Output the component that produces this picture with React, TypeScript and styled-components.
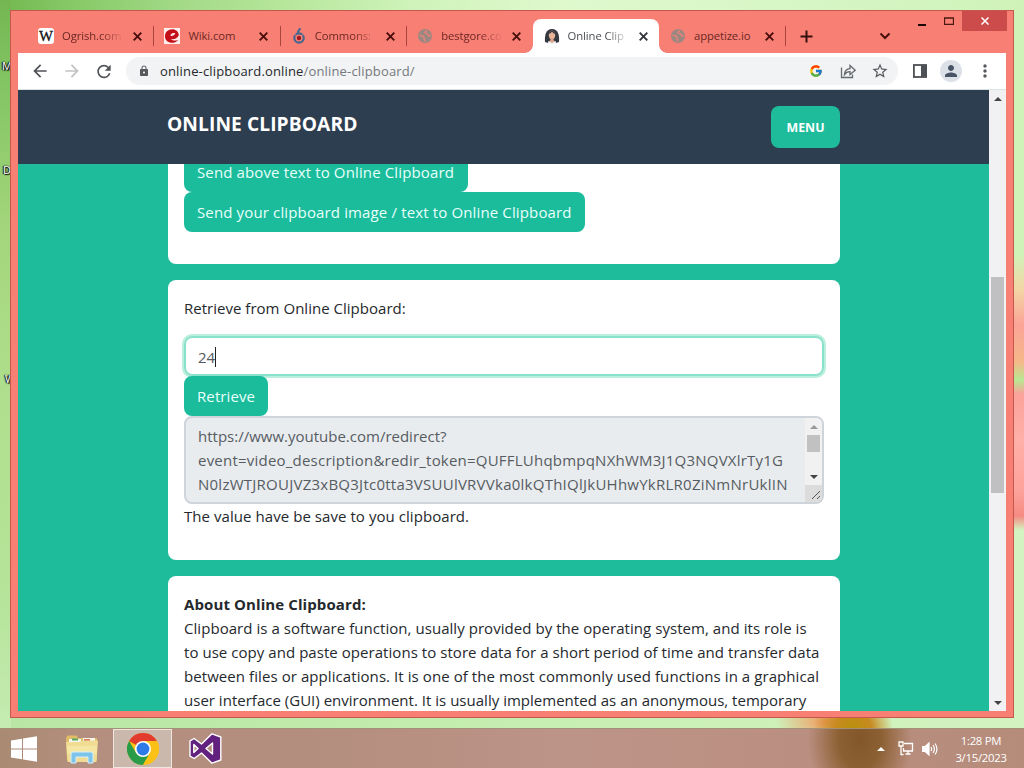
import React from 'react'
import styled, { createGlobalStyle, css } from 'styled-components'
import { FcGoogle } from 'react-icons/fc'
import {
  MdArrowBack,
  MdArrowForward,
  MdLock,
  MdMoreVert,
  MdPerson,
  MdRefresh,
  MdStarBorder
} from 'react-icons/md'

const GlobalStyle = createGlobalStyle`
  * {
    box-sizing: border-box;
  }

  body {
    margin: 0;
    overflow: hidden;
    font-family: 'Open Sans', 'Noto Sans', sans-serif;
  }
`

const Desktop = styled.div`
  position: relative;
  display: flex;
  flex-direction: column;
  width: 1024px;
  height: 768px;
  overflow: hidden;
  background:
    radial-gradient(ellipse 40px 34px at 853px 728px, #b8900c 0%, #c88a20 45%, transparent 100%),
    radial-gradient(ellipse 50px 22px at 826px 722px, #f29a60 0%, transparent 100%),
    linear-gradient(180deg, transparent 255px, #f3d5a4 290px, #fba497 325px, #f5b888 362px, #b8e892 380px, #fba29a 394px, #ffb0a8 440px, #fda39b 490px, #f58b82 516px, transparent 530px) 1014px 0 / 10px 768px no-repeat,
    linear-gradient(180deg, #74b751 0, #84c565 90px, #a2d57b 220px, #b0df8d 400px, #b6e49a 600px, #c5ebb2 728px) 0 0 / 11px 728px no-repeat,
    linear-gradient(90deg, #72b84f 0, #86c866 70px, #a3da87 180px, #b7e79c 290px, #cdf2b8 400px, #dff9cd 560px, #d6f6c5 800px, #cff2b9 1024px) 0 0 / 1024px 300px no-repeat,
    linear-gradient(90deg, #b9e6a4 0, #bfeaaa 300px, #c9efb5 600px, #d3f3c0 1024px);
`

const DesktopLabel = styled.span<{ $top: number; $left: number }>`
  position: absolute;
  top: ${props => props.$top}px;
  left: ${props => props.$left}px;
  font-size: 11px;
  line-height: 14px;
  color: #fff;
  text-shadow: 0 0 2px #000, 1px 1px 1px #000, -1px 0 1px #000;
`

const BrowserWindow = styled.div`
  position: relative;
  display: flex;
  flex-direction: column;
  width: 1004px;
  height: 708px;
  margin: 10px 0 0 10px;
  padding: 0 7px 6px;
  border: 1px solid #c4584d;
  background: #f77f74;
`

const TabStrip = styled.div`
  position: relative;
  display: flex;
  align-items: flex-end;
  flex: none;
  height: 42px;
  padding-left: 9px;
`

const TabItem = styled.div<{ $active?: boolean; $separator?: boolean }>`
  position: relative;
  display: flex;
  align-items: center;
  flex: none;
  width: 126.4px;
  height: 34px;
  padding: 0 9px 0 11px;
  color: ${props => (props.$active ? '#4a4d51' : '#6c2723')};

  ${props =>
    props.$active &&
    css`
      background: #fff;
      border-radius: 8px 8px 0 0;

      &::before,
      &::after {
        content: '';
        position: absolute;
        bottom: 0;
        width: 8px;
        height: 8px;
      }

      &::before {
        left: -8px;
        background: radial-gradient(circle at 0 0, transparent 7.5px, #fff 8px);
      }

      &::after {
        right: -8px;
        background: radial-gradient(circle at 100% 0, transparent 7.5px, #fff 8px);
      }
    `}

  ${props =>
    props.$separator &&
    css`
      &::after {
        content: '';
        position: absolute;
        right: -1px;
        top: 7px;
        width: 1px;
        height: 20px;
        background: #a8463e;
      }
    `}
`

const TabIcon = styled.span`
  display: flex;
  flex: none;
  width: 16px;
  height: 16px;
  margin-right: 8px;
`

const TabTitle = styled.span<{ $fade?: boolean }>`
  width: 62px;
  overflow: hidden;
  white-space: nowrap;
  font-size: 11.3px;
  line-height: 18px;
  letter-spacing: -0.1px;
  mask-image: ${props => (props.$fade ? 'linear-gradient(90deg, #000 62%, transparent 100%)' : 'none')};
`

const CloseIcon = styled.svg<{ $dark?: boolean }>`
  flex: none;
  width: 9px;
  height: 9px;
  margin-left: 9px;
  stroke: ${props => (props.$dark ? '#33363a' : '#4a0f0c')};
  stroke-width: 1.9;
`

const NewTabIcon = styled.svg`
  width: 13px;
  height: 13px;
  margin: 0 0 10px 15px;
  stroke: #35100e;
  stroke-width: 2;
`

const TabSearchIcon = styled.svg`
  width: 12px;
  height: 8px;
  margin: 0 0 13px 66px;
  fill: none;
  stroke: #4a0f0c;
  stroke-width: 2;
`

const WindowControls = styled.div`
  position: absolute;
  top: 0;
  right: -1px;
  display: flex;
  height: 20px;
`

const ControlButton = styled.div<{ $close?: boolean }>`
  display: flex;
  align-items: center;
  justify-content: center;
  width: ${props => (props.$close ? 45 : 27)}px;
  height: 20px;
  background: ${props => (props.$close ? '#cc4b4b' : 'transparent')};
`

const Toolbar = styled.div`
  display: flex;
  align-items: center;
  flex: none;
  height: 37px;
  padding: 0 10px 0 12px;
  background: #fff;
  color: #55585c;
  border-bottom: 1px solid #d9e4e0;
`

const NavButton = styled.span<{ $disabled?: boolean }>`
  display: flex;
  align-items: center;
  justify-content: center;
  flex: none;
  width: 20px;
  height: 20px;
  margin-right: 12px;
  color: ${props => (props.$disabled ? '#c0c2c4' : '#4f5256')};
`

const Omnibox = styled.div`
  display: flex;
  align-items: center;
  flex: none;
  width: 772px;
  height: 28px;
  padding: 0 9px 0 12px;
  border-radius: 14px;
  background: #f1f3f4;
`

const Url = styled.span`
  flex: 1;
  margin-left: 10px;
  font-size: 13px;
  letter-spacing: 0.16px;
  color: #75797e;

  b {
    font-weight: 400;
    color: #26292d;
  }
`

const OmniboxIcon = styled.span`
  display: flex;
  align-items: center;
  justify-content: center;
  width: 18px;
  height: 18px;
  margin-left: 14px;
`

const ToolbarActions = styled.div`
  display: flex;
  align-items: center;
  justify-content: space-between;
  flex: 1;
  padding: 0 1px 0 15px;
`

const Avatar = styled.span`
  display: flex;
  align-items: center;
  justify-content: center;
  width: 22px;
  height: 22px;
  border-radius: 50%;
  background: #dce1e8;
  color: #495366;
`

const Viewport = styled.div`
  display: flex;
  flex: 1;
  min-height: 0;
`

const Page = styled.div`
  display: flex;
  flex-direction: column;
  flex: none;
  width: 971px;
  overflow: hidden;
  background: #1fbc9c;
  color: #25292d;
`

const PageHeader = styled.header`
  display: flex;
  align-items: center;
  justify-content: space-between;
  flex: none;
  height: 74px;
  padding: 0 149px 0 150px;
  background: #2d3e50;
  color: #fff;
`

const Brand = styled.div`
  margin: -7px 0 0 -1px;
  font-size: 19.2px;
  font-weight: 700;
  letter-spacing: 0.08px;
`

const MenuButton = styled.button`
  width: 69px;
  height: 42px;
  padding: 0;
  border: 0;
  border-radius: 8px;
  background: #1fbc9c;
  color: #fff;
  font: 700 12.4px 'Open Sans', sans-serif;
`

const Main = styled.main`
  display: flex;
  flex-direction: column;
  gap: 16px;
  flex: 1;
  min-height: 0;
  padding: 0 149px 0 150px;
  overflow: hidden;
`

const Card = styled.section<{ $height: number; $scrolled?: boolean }>`
  display: flex;
  flex-direction: column;
  align-items: flex-start;
  justify-content: ${props => (props.$scrolled ? 'flex-end' : 'flex-start')};
  flex: none;
  height: ${props => props.$height}px;
  padding: ${props => (props.$scrolled ? '0 16px 32px' : '16px')};
  overflow: hidden;
  border-radius: ${props => (props.$scrolled ? '0 0 8px 8px' : '8px')};
  background: #fff;
`

const Button = styled.button<{ $width: number; $spacing?: number }>`
  flex: none;
  width: ${props => props.$width}px;
  height: 40px;
  padding: 0 0 0 13px;
  border: 0;
  border-radius: 8px;
  background: #1abc9c;
  color: #e9fffa;
  font: 400 15px/24px 'Open Sans', sans-serif;
  letter-spacing: ${props => props.$spacing || 0}px;
  text-align: left;
  white-space: nowrap;
`

const Line = styled.div<{ $spacing?: number; $bold?: boolean }>`
  font-size: 15px;
  font-weight: ${props => (props.$bold ? 700 : 400)};
  line-height: 24px;
  letter-spacing: ${props => props.$spacing || 0}px;
  white-space: nowrap;
`

const CodeInput = styled.div`
  display: flex;
  align-items: center;
  flex: none;
  width: 100%;
  height: 40px;
  margin-top: 16px;
  padding: 2px 12px 0 12px;
  border: 2px solid #8ae0c8;
  border-radius: 8px;
  box-shadow: 0 0 0 2px #b9efdf;
  color: #55595d;
  font-size: 15px;
`

const Caret = styled.span`
  width: 1px;
  height: 20px;
  background: #222;
`

const ResultBox = styled.div`
  display: flex;
  justify-content: space-between;
  flex: none;
  width: 100%;
  height: 88px;
  border: 2px solid #ced4da;
  border-radius: 8px;
  background: #e9ecef;
  color: #565c62;
  overflow: hidden;
`

const ResultText = styled.div`
  padding: 6px 0 0 12px;
`

const BoxScroll = styled.div`
  display: flex;
  flex-direction: column;
  align-items: center;
  flex: none;
  width: 17px;
  background: #f1f1f1;
`

const BoxThumb = styled.div`
  width: 13px;
  height: 17px;
  margin-bottom: auto;
  background: #c1c1c1;
`

const ResizeGrip = styled.svg`
  flex: none;
  width: 17px;
  height: 17px;
  background: #dcdcdc;
  stroke: #555;
`

const Arrow = styled.span<{ $down?: boolean; $dim?: boolean }>`
  display: flex;
  align-items: center;
  justify-content: center;
  flex: none;
  width: 17px;
  height: 17px;

  &::before {
    content: '';
    border: 4px solid transparent;
    border-top-width: ${props => (props.$down ? 4 : 0)}px;
    border-bottom-width: ${props => (props.$down ? 0 : 4)}px;
    border-top-color: ${props => (props.$dim ? '#999' : '#444')};
    border-bottom-color: ${props => (props.$dim ? '#999' : '#444')};
  }
`

const PageScroll = styled.div`
  display: flex;
  flex-direction: column;
  align-items: center;
  width: 17px;
  background: #f1f0f2;
`

const PageThumb = styled.div`
  width: 13px;
  height: 216px;
  margin: 170px 0 auto;
  background: #c0bfc1;
`

const Taskbar = styled.div`
  display: flex;
  align-items: center;
  width: 1024px;
  height: 40px;
  margin-top: auto;
  padding-left: 10px;
  border-top: 1px solid #a29078;
  background:
    radial-gradient(ellipse 52px 75px at 860px 10px, #835729 0%, #8b6032 40%, transparent 100%),
    linear-gradient(90deg, #a98a72 0, #b48f80 90px, #b38d7d 300px, #bd9488 560px, #bb9083 760px, #b58b7a 1024px);
`

const TaskIcon = styled.span<{ $width: number; $indent?: number }>`
  display: flex;
  align-items: center;
  justify-content: center;
  flex: none;
  width: ${props => props.$width}px;
  height: 39px;
  padding-left: ${props => props.$indent || 0}px;
`

const ActiveTask = styled(TaskIcon)`
  border: 1px solid #efe6df;
  background: #cbb8ad;
`

const Tray = styled.div`
  display: flex;
  align-items: center;
  gap: 8px;
  margin-left: auto;
  padding-right: 15px;
`

const TrayArrow = styled.span`
  border: 4px solid transparent;
  border-top: 0;
  border-bottom-color: #fff;
  margin-right: 5px;
`

const Clock = styled.div`
  width: 56px;
  margin-left: 7px;
  color: #fff;
  font-size: 11.4px;
  line-height: 17px;
  letter-spacing: -0.3px;
  text-align: center;
  white-space: nowrap;
`

const WikipediaIcon = () => (
  <svg width="16" height="16" viewBox="0 0 16 16">
    <rect width="16" height="16" rx="3" fill="#fff" />
    <text x="8" y="12.8" fontFamily="Liberation Serif, serif" fontSize="14" textAnchor="middle" textLength="14" lengthAdjust="spacingAndGlyphs" fill="#111" stroke="#111" strokeWidth=".3">
      W
    </text>
  </svg>
)

const WikiComIcon = () => (
  <svg width="16" height="16" viewBox="0 0 16 16">
    <rect width="16" height="16" fill="#fdf0ec" />
    <path d="M14.800 7.200C14.500 3.500 11.800 1.300 8.300 1.300 4 1.300 1 4.300 1 8.200c0 3.900 2.900 6.600 7 6.600 2.700 0 5-1.100 6.300-3.100-2.500 1.200-5.600 1.300-7.200-.7 3.200.6 6.200-.6 7.700-3.800ZM6.300 7.800c.5-2.200 2.600-3.300 5-2.500-.6 1.900-2.600 2.900-5 2.500Z" fill="#c4101a" />
  </svg>
)

const CommonsIcon = () => (
  <svg width="16" height="16" viewBox="0 0 16 16">
    <path d="M8.800 0C9.300 2 6.800 2.600 6.800 4.800" fill="none" stroke="#3d6796" strokeWidth="2" />
    <circle cx="8" cy="10" r="4.700" fill="none" stroke="#44678f" strokeWidth="2.200" />
    <circle cx="8" cy="10" r="2.200" fill="#a3171c" />
    <path d="M3.300 5.800 5.800 8.300M12.700 5.800 10.200 8.300" stroke="#f77f74" strokeWidth="1" />
  </svg>
)

const GlobeIcon = () => (
  <svg width="16" height="16" viewBox="0 0 16 16">
    <circle cx="8" cy="8" r="7" fill="#9d8781" />
    <path d="M2.500 7.200c1.500.8 2.800.2 4 1.300 1 .9-.2 1.700.8 2.600.7.700.6 1.500.1 2.400M9.500 2.300c.3 1-1 1.400-1.700 2 .2 1.200 1.200.9 2.300 1.400 1 .5.6 1.700 1.600 2.100.8.300 1.400-.1 2-.6" fill="none" stroke="#e58378" strokeWidth="1.500" />
  </svg>
)

const WomanIcon = () => (
  <svg width="16" height="16" viewBox="0 0 16 16">
    <path d="M1 14C.5 8 1.500 1 8 1s7.500 7 7 13l-3 1H4Z" fill="#34383f" />
    <ellipse cx="8" cy="7" rx="3.200" ry="4.200" fill="#e7b49b" />
    <path d="M6.500 10h3v2l2 2-3.500 2-3.500-2 2-2Z" fill="#dfa68e" />
    <path d="M4.500 13 8 15l3.500-2 1 3h-9Z" fill="#eff5f7" />
    <path d="M4.800 6C5 3.500 6.500 3 8 3s3 .5 3.200 3C9.500 5.500 8.500 4.500 8 3.500 7.500 4.500 6.500 5.500 4.800 6Z" fill="#34383f" />
  </svg>
)

const ShareIcon = () => (
  <svg width="17" height="15" viewBox="0 0 17 15" fill="none" stroke="#66696d" strokeWidth="1.300">
    <path d="M1.500 3.500v10h11v-3M4.500 10.500C4.800 6.800 6.800 4.700 10 4.600V1.500l5.200 4.700L10 10.500V7.600C7.500 7.500 6 8.400 4.500 10.500Z" />
  </svg>
)

const SidePanelIcon = () => (
  <svg width="14" height="14" viewBox="0 0 14 14">
    <rect x=".9" y="1" width="12.200" height="12" fill="none" stroke="#4d5054" strokeWidth="1.800" />
    <rect x="8" y="1" width="5.500" height="12" fill="#4d5054" />
  </svg>
)

const WindowsLogo = () => (
  <svg width="28" height="26" viewBox="0 0 28 26" fill="#fff">
    <path d="M1 4.500 12 2.700V12.600H1ZM13 2.500 27 .3V12.600H13ZM1 13.500H12V23.300L1 21.600ZM13 13.500H27V25.700L13 23.500Z" />
  </svg>
)

const ExplorerIcon = () => (
  <svg width="34" height="30" viewBox="0 0 34 30">
    <path d="M1 4 2.500 1.500h9L13 4h19v22H2Z" fill="#dfbd68" />
    <path d="M4 5h12v4H4ZM18 4h12v5H18Z" fill="#f6f6ec" />
    <path d="M7 4.500h6v2H7Z" fill="#5aa85f" />
    <path d="M19 5h6v2h-6Z" fill="#d97b60" />
    <path d="M1 8h14l2-1.500h16L31.500 28H2.500Z" fill="#f0dc92" />
    <path d="M2 12h30L31.500 20H2.500Z" fill="#f6e6a4" />
    <path d="M6 29V20q0-2 2-2h18q2 0 2 2v9h-5v-6H11v6Z" fill="#7dc3ea" stroke="#d8f0fa" />
  </svg>
)

const ChromeIcon = () => (
  <svg width="32" height="32" viewBox="0 0 32 32">
    <circle cx="16" cy="16" r="16" fill="#fbc116" />
    <path d="M16 16 2.140 8A16 16 0 0 1 29.860 8H16Z" fill="#e33b2e" />
    <path d="M2.140 8 9.070 20 16 24 22.930 20 16 32A16 16 0 0 1 2.140 8Z" fill="#2a9c49" />
    <path d="M29.860 8H16l6.930 12L16 32A16 16 0 0 0 29.860 8Z" fill="#fbc116" />
    <circle cx="16" cy="16" r="8" fill="#fff" />
    <circle cx="16" cy="16" r="6.400" fill="#2e7be8" />
  </svg>
)

const VisualStudioIcon = () => (
  <svg width="33" height="31" viewBox="0 0 33 31">
    <path
      fillRule="evenodd"
      d="M23 .8 31.800 4V27L23 30.200 12.500 20 5.200 25.500 1 23.200V7.800L5.200 5.500l7.300 5.500ZM23.500 10 17 15.500l6.500 5.500ZM4.800 11.500v8L9 15.500Z"
      fill="#63217f"
      stroke="#fff"
      strokeWidth="1.400"
      strokeLinejoin="round"
    />
  </svg>
)

const NetworkIcon = () => (
  <svg width="16" height="15" viewBox="0 0 16 15" fill="none" stroke="#fff" strokeWidth="1.300">
    <path d="M6 2.500h8.500v7.500H5.500V7M7.500 13h5M10 10v3M1 1h4v4H1ZM3 5v8.500h2.500" />
  </svg>
)

const SpeakerIcon = () => (
  <svg width="16" height="14" viewBox="0 0 16 14" fill="none" stroke="#fff" strokeWidth="1.200">
    <path d="M.7 4.500h2.500L7 1v12L3.200 9.500H.7Z" fill="#fff" />
    <path d="M9 5q1.300 2 0 4M11 3q2.800 4 0 8M13 1.500q4 5.500 0 11" />
  </svg>
)

interface TabData {
  title: string
  icon: React.ReactNode
  active?: boolean
  separator?: boolean
  fade?: boolean
}

const tabs: TabData[] = [
  { title: 'Ogrish.com', icon: <WikipediaIcon />, separator: true, fade: true },
  { title: 'Wiki.com', icon: <WikiComIcon />, separator: true },
  { title: 'Commons:', icon: <CommonsIcon />, separator: true, fade: true },
  { title: 'bestgore.co', icon: <GlobeIcon />, fade: true },
  { title: 'Online Clip', icon: <WomanIcon />, active: true, fade: true },
  { title: 'appetize.io', icon: <GlobeIcon />, separator: true }
]

const resultLines = [
  { text: 'https://www.youtube.com/redirect?', spacing: 0 },
  { text: 'event=video_description&redir_token=QUFFLUhqbmpqNXhWM3J1Q3NQVXlrTy1G', spacing: 0.22 },
  { text: 'N0lzWTJROUJVZ3xBQ3Jtc0tta3VSUUlVRVVka0lkQThIQlJkUHhwYkRLR0ZiNmNrUklIN', spacing: 0.25 }
]

const aboutLines = [
  { text: 'Clipboard is a software function, usually provided by the operating system, and its role is', spacing: 0.05 },
  { text: 'to use copy and paste operations to store data for a short period of time and transfer data', spacing: 0.05 },
  { text: 'between files or applications. It is one of the most commonly used functions in a graphical', spacing: 0.075 },
  { text: 'user interface (GUI) environment. It is usually implemented as an anonymous, temporary', spacing: 0.015 }
]

const BrowserTabs: React.FC = () => (
  <TabStrip>
    {tabs.map(tab => (
      <TabItem key={tab.title} $active={tab.active} $separator={tab.separator}>
        <TabIcon>{tab.icon}</TabIcon>
        <TabTitle $fade={tab.fade}>{tab.title}</TabTitle>
        <CloseIcon viewBox="0 0 9 9" $dark={tab.active}>
          <path d="M.7.7 8.300 8.300M8.300.7.7 8.300" />
        </CloseIcon>
      </TabItem>
    ))}
    <NewTabIcon viewBox="0 0 13 13">
      <path d="M6.500.5v12M.5 6.500h12" />
    </NewTabIcon>
    <TabSearchIcon viewBox="0 0 12 8">
      <path d="M1.500 1.500 6 6l4.500-4.500" />
    </TabSearchIcon>
    <WindowControls>
      <ControlButton>
        <svg width="8" height="12" viewBox="0 0 8 12">
          <path d="M0 10h8" stroke="#1e0807" strokeWidth="2" />
        </svg>
      </ControlButton>
      <ControlButton>
        <svg width="10" height="8" viewBox="0 0 10 8">
          <path d="M.5 1h9v6.500h-9Z" fill="none" stroke="#4a1a10" strokeWidth="1.300" />
        </svg>
      </ControlButton>
      <ControlButton $close>
        <svg width="8" height="8" viewBox="0 0 8 8">
          <path d="M.5.5l7 7M7.500.5l-7 7" stroke="#fff" strokeWidth="1.500" />
        </svg>
      </ControlButton>
    </WindowControls>
  </TabStrip>
)

const AddressBar: React.FC = () => (
  <Toolbar>
    <NavButton>
      <MdArrowBack size={20} />
    </NavButton>
    <NavButton $disabled>
      <MdArrowForward size={20} />
    </NavButton>
    <NavButton>
      <MdRefresh size={21} />
    </NavButton>
    <Omnibox>
      <MdLock size={12} />
      <Url>
        <b>online-clipboard.online</b>/online-clipboard/
      </Url>
      <OmniboxIcon>
        <FcGoogle size={14} />
      </OmniboxIcon>
      <OmniboxIcon>
        <ShareIcon />
      </OmniboxIcon>
      <OmniboxIcon>
        <MdStarBorder size={18} />
      </OmniboxIcon>
    </Omnibox>
    <ToolbarActions>
      <SidePanelIcon />
      <Avatar>
        <MdPerson size={18} />
      </Avatar>
      <MdMoreVert size={20} />
    </ToolbarActions>
  </Toolbar>
)

const ClipboardPage: React.FC = () => (
  <Page>
    <PageHeader>
      <Brand>ONLINE CLIPBOARD</Brand>
      <MenuButton>MENU</MenuButton>
    </PageHeader>
    <Main>
      <Card $height={100} $scrolled>
        <Button $width={284} $spacing={0.13}>Send above text to Online Clipboard</Button>
        <Button $width={401} $spacing={0.14}>Send your clipboard image / text to Online Clipboard</Button>
      </Card>
      <Card $height={280}>
        <Line $spacing={0.02}>Retrieve from Online Clipboard:</Line>
        <CodeInput>
          24
          <Caret />
        </CodeInput>
        <Button $width={84} $spacing={0.1}>Retrieve</Button>
        <ResultBox>
          <ResultText>
            {resultLines.map(line => (
              <Line key={line.text} $spacing={line.spacing}>
                {line.text}
              </Line>
            ))}
          </ResultText>
          <BoxScroll>
            <Arrow $dim />
            <BoxThumb />
            <Arrow $down />
            <ResizeGrip viewBox="0 0 17 17">
              <path d="M7 14 15 6M12 14l3-3" />
            </ResizeGrip>
          </BoxScroll>
        </ResultBox>
        <Line $spacing={0.06}>The value have be save to you clipboard.</Line>
      </Card>
      <Card $height={200}>
        <Line $bold $spacing={0.1}>About Online Clipboard:</Line>
        {aboutLines.map(line => (
          <Line key={line.text} $spacing={line.spacing}>
            {line.text}
          </Line>
        ))}
      </Card>
    </Main>
  </Page>
)

const App: React.FC = () => (
  <>
    <GlobalStyle />
    <Desktop>
      <DesktopLabel $top={59} $left={2}>M</DesktopLabel>
      <DesktopLabel $top={163} $left={3}>D</DesktopLabel>
      <DesktopLabel $top={372} $left={5}>W</DesktopLabel>
      <BrowserWindow>
        <BrowserTabs />
        <AddressBar />
        <Viewport>
          <ClipboardPage />
          <PageScroll>
            <Arrow />
            <PageThumb />
            <Arrow $down />
          </PageScroll>
        </Viewport>
      </BrowserWindow>
      <Taskbar>
        <TaskIcon $width={28}>
          <WindowsLogo />
        </TaskIcon>
        <TaskIcon $width={75} $indent={12}>
          <ExplorerIcon />
        </TaskIcon>
        <ActiveTask $width={59}>
          <ChromeIcon />
        </ActiveTask>
        <TaskIcon $width={66}>
          <VisualStudioIcon />
        </TaskIcon>
        <Tray>
          <TrayArrow />
          <NetworkIcon />
          <SpeakerIcon />
          <Clock>
            1:28 PM
            <br />
            3/15/2023
          </Clock>
        </Tray>
      </Taskbar>
    </Desktop>
  </>
)

export default App
